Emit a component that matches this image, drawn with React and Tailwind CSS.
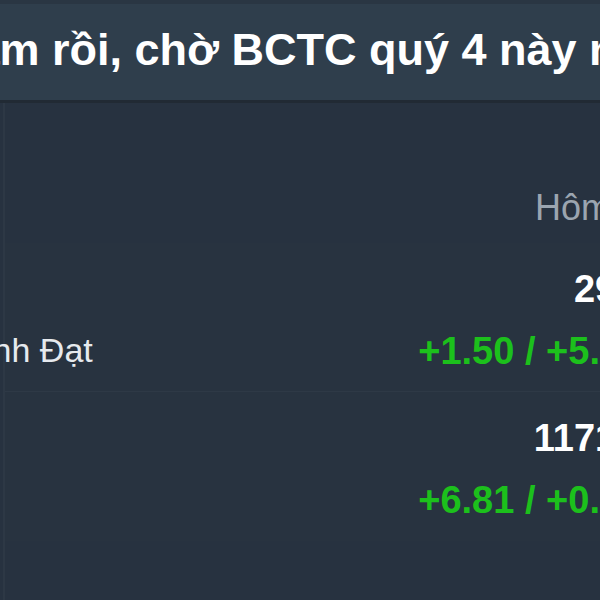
import React from 'react';

// Mock Data
const ROWS = [
  { id: 1, name: 'Thành Đạt', price: '29.35', change: '+1.50 / +5.38%' },
  { id: 2, name: null, price: '1171.60', change: '+6.81 / +0.58%' },
];

const App = () => {
  return (
    <div className="w-[600px] h-[600px] overflow-hidden bg-[#273240] font-['Liberation_Sans',Arial,sans-serif]">
      {/* Title bar */}
      <div className="h-[4px] bg-[#2a3643]" />
      <div className="h-[96px] bg-[#2f3e4c] pt-[23px] whitespace-nowrap">
        <div className="ml-[-53px] text-[45px] leading-none font-bold text-white">
          năm rồi, chờ BCTC quý 4 này nhé
        </div>
      </div>
      <div className="h-[3px] bg-[#212a34]" />

      {/* Quote table */}
      <div className="w-[700px] h-[500px] ml-[3px] border-l-2 border-[#2d3845]">
        <div className="h-[140px] flex justify-end pt-[87px] pr-[24px]">
          <span className="text-[36px] leading-none text-[#9ba5b0]">Hôm nay</span>
        </div>

        {ROWS.map((row, i) => (
          <div
            key={row.id}
            className={`h-[149px] flex justify-between bg-[#283340] ${i === 0 ? 'border-b border-[#2e3946]' : ''}`}
          >
            <div className="pt-[90px] whitespace-nowrap">
              {row.name && (
                <div className="ml-[-71px] text-[34px] leading-none text-[#e6eaee]">{row.name}</div>
              )}
            </div>
            <div className="pt-[27px] pr-[27px] text-right whitespace-nowrap">
              <div className="mr-[7px] text-[38px] leading-none font-bold text-white">{row.price}</div>
              <div className="mt-[24px] text-[38px] leading-none font-bold text-[#1cc01c]">{row.change}</div>
            </div>
          </div>
        ))}
      </div>
    </div>
  );
};

export default App;
